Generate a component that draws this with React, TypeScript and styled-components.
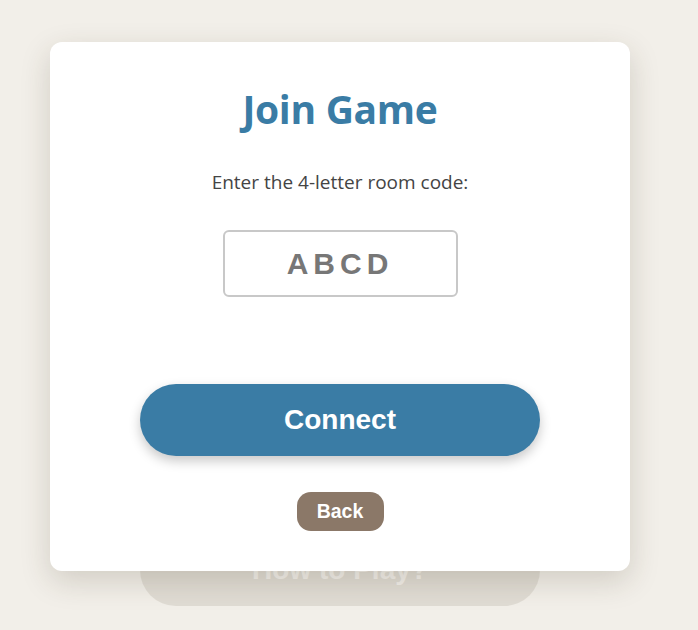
import React, { useState } from 'react';
import styled, { createGlobalStyle } from 'styled-components';

const GlobalStyle = createGlobalStyle`
  html, body {
    margin: 0;
    padding: 0;
    background: #f2efe9;
  }
  body {
    font-family: 'Open Sans', 'Noto Sans', sans-serif;
    overflow: hidden;
  }
`;

const Page = styled.div`
  position: relative;
  width: 680px;
  height: 630px;
`;

/**
 * Main menu, fading out behind the dialog
 *
 */
const Menu = styled.div`
  display: flex;
  flex-direction: column;
  align-items: center;
  gap: 24px;
  padding-top: 342px;
  opacity: 0.3;
`;

const MenuButton = styled.button`
  width: 400px;
  height: 72px;
  border: none;
  border-radius: 36px;
  background: #b9b2a6;
  color: #f4f2ee;
  font-family: 'Liberation Sans', Arial, sans-serif;
  font-size: 28px;
  font-weight: bold;
`;

/**
 * Join dialog
 *
 */
const Modal = styled.div`
  position: absolute;
  top: 42px;
  left: 50px;
  width: 580px;
  box-sizing: border-box;
  padding: 43px 40px 40px;

  display: flex;
  flex-direction: column;
  align-items: center;

  background: #ffffff;
  border-radius: 12px;
  box-shadow: 0 10px 30px rgba(60, 50, 30, 0.18);
`;

const Title = styled.h2`
  margin: 0;
  font-size: 39px;
  line-height: 48px;
  font-weight: 700;
  letter-spacing: -0.3px;
  color: #3a7ca5;
`;

const Prompt = styled.p`
  margin: 36px 0 0 0;
  font-size: 19px;
  line-height: 27px;
  color: #444444;
`;

const CodeInput = styled.input`
  margin-top: 34px;
  width: 235px;
  height: 67px;
  box-sizing: border-box;
  border: 2.5px solid #c8c8c8;
  border-radius: 6px;
  outline: none;

  font-family: 'Liberation Sans', Arial, sans-serif;
  font-size: 30px;
  font-weight: bold;
  letter-spacing: 5px;
  text-indent: 0;
  text-align: center;
  text-transform: uppercase;
  color: #333333;

  &::placeholder {
    color: #777777;
  }
`;

const PillButton = styled.button<{ $variant: 'primary' | 'back' }>`
  border: none;
  cursor: pointer;
  color: #ffffff;
  font-family: 'Liberation Sans', Arial, sans-serif;
  font-weight: bold;

  ${({ $variant }) =>
    $variant === 'primary'
      ? `
    margin-top: 87px;
    width: 400px;
    height: 72px;
    border-radius: 36px;
    background: #3a7ca5;
    font-size: 28px;
    box-shadow: 0 5px 12px rgba(0, 0, 0, 0.22);
  `
      : `
    margin-top: 36px;
    width: 87px;
    height: 39px;
    border-radius: 14px;
    background: #8b7868;
    font-size: 19.5px;
  `}
`;

const App: React.FC = () => {
  const [code, setCode] = useState('');

  return (
    <Page>
      <GlobalStyle />
      <Menu>
        <MenuButton>Create Game</MenuButton>
        <MenuButton>Join Game</MenuButton>
        <MenuButton>How to Play?</MenuButton>
      </Menu>

      <Modal>
        <Title>Join Game</Title>
        <Prompt>Enter the 4-letter room code:</Prompt>
        <CodeInput
          value={code}
          maxLength={4}
          placeholder="ABCD"
          onChange={(e) => setCode(e.target.value)}
        />
        <PillButton $variant="primary">Connect</PillButton>
        <PillButton $variant="back">Back</PillButton>
      </Modal>
    </Page>
  );
};

export default App;
